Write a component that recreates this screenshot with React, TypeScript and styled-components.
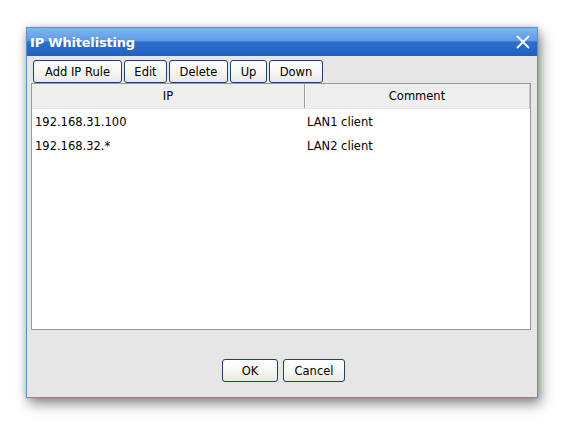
import React from "react";
import styled, { createGlobalStyle } from "styled-components";

const Global = createGlobalStyle`
  html, body { margin: 0; padding: 0; background: #ffffff; }
  body { font-family: "DejaVu Sans", Verdana, sans-serif; font-size: 11px; color: #000; }
`;

const Page = styled.div`
  width: 564px;
  height: 424px;
  padding: 27px 0 0 26px;
  box-sizing: border-box;
`;

const Dialog = styled.div`
  width: 512px;
  height: 371px;
  box-sizing: border-box;
  border: 1px solid #5f8dcf;
  background: #e6e6e6;
  box-shadow: 3px 6px 12px rgba(0, 0, 0, 0.45), 0 0 6px rgba(0, 0, 0, 0.15);
  display: flex;
  flex-direction: column;
`;

const TitleBar = styled.div`
  height: 28px;
  flex: none;
  display: flex;
  align-items: center;
  justify-content: space-between;
  padding: 0 6px 0 3px;
  background: linear-gradient(#80b6f0 0%, #5e9ae6 45%, #2e6fcc 50%, #2060c0 100%);
`;

const Title = styled.div`
  color: #fff;
  font-weight: bold;
  font-size: 13px;
  letter-spacing: -0.2px;
`;

const Close = styled.div`
  width: 16px;
  height: 16px;
  display: flex;
  align-items: center;
  justify-content: center;
`;

const Toolbar = styled.div`
  display: flex;
  gap: 2px;
  padding: 4px 0 0 6px;
`;

const Button = styled.button<{ $w: number }>`
  width: ${(p) => p.$w}px;
  height: 23px;
  box-sizing: border-box;
  border: 1px solid #1e3f6a;
  border-radius: 3px;
  background: linear-gradient(#ffffff 0%, #f6f6f2 50%, #ebeae4 100%);
  font-family: "DejaVu Sans", Verdana, sans-serif;
  font-size: 11.5px;
  color: #000;
  padding: 0;
  display: flex;
  align-items: center;
  justify-content: center;
`;

const Grid = styled.div`
  margin: 0 6px 0 4px;
  height: 247px;
  box-sizing: border-box;
  border: 1px solid #9a9a9a;
  background: #fff;
  display: flex;
  flex-direction: column;
`;

const Row = styled.div<{ $head?: boolean }>`
  display: grid;
  grid-template-columns: 273px 1fr;
  height: 24px;
  background: ${(p) => (p.$head ? "#eeeeee" : "#ffffff")};
  ${(p) => (p.$head ? "border-bottom: 1px solid #e4e4e4;" : "")}
`;

const Cell = styled.div<{ $head?: boolean; $first?: boolean }>`
  display: flex;
  align-items: center;
  justify-content: ${(p) => (p.$head ? "center" : "flex-start")};
  font-size: 11.5px;
  padding: ${(p) => (p.$head ? "0" : p.$first ? "2px 0 0 3px" : "2px 0 0 2px")};
  ${(p) => (p.$head && p.$first ? "border-right: 1px solid #9a9a9a; box-shadow: 1px 0 0 #ffffff;" : "")}
  ${(p) => (p.$head && !p.$first ? "border-right: 1px solid #c8c8c8;" : "")}
`;

const Footer = styled.div`
  flex: 1;
  display: flex;
  justify-content: center;
  align-items: flex-start;
  gap: 5px;
  padding: 29px 0 0 3px;
`;

const rows = [
  { ip: "192.168.31.100", comment: "LAN1 client" },
  { ip: "192.168.32.*", comment: "LAN2 client" },
];

export default function App() {
  return (
    <Page>
      <Global />
      <Dialog>
        <TitleBar>
          <Title>IP Whitelisting</Title>
          <Close>
            <svg width="14" height="14" viewBox="0 0 14 14">
              <path d="M1.5 1.5 L12.5 12.5 M12.5 1.5 L1.5 12.5" stroke="#fff" strokeWidth="1.8" strokeLinecap="round" />
            </svg>
          </Close>
        </TitleBar>
        <Toolbar>
          <Button $w={89}>Add IP Rule</Button>
          <Button $w={43}>Edit</Button>
          <Button $w={59}>Delete</Button>
          <Button $w={37}>Up</Button>
          <Button $w={54}>Down</Button>
        </Toolbar>
        <Grid>
          <Row $head>
            <Cell $head $first>IP</Cell>
            <Cell $head>Comment</Cell>
          </Row>
          {rows.map((r) => (
            <Row key={r.ip}>
              <Cell $first>{r.ip}</Cell>
              <Cell>{r.comment}</Cell>
            </Row>
          ))}
        </Grid>
        <Footer>
          <Button $w={56}>OK</Button>
          <Button $w={62}>Cancel</Button>
        </Footer>
      </Dialog>
    </Page>
  );
}
